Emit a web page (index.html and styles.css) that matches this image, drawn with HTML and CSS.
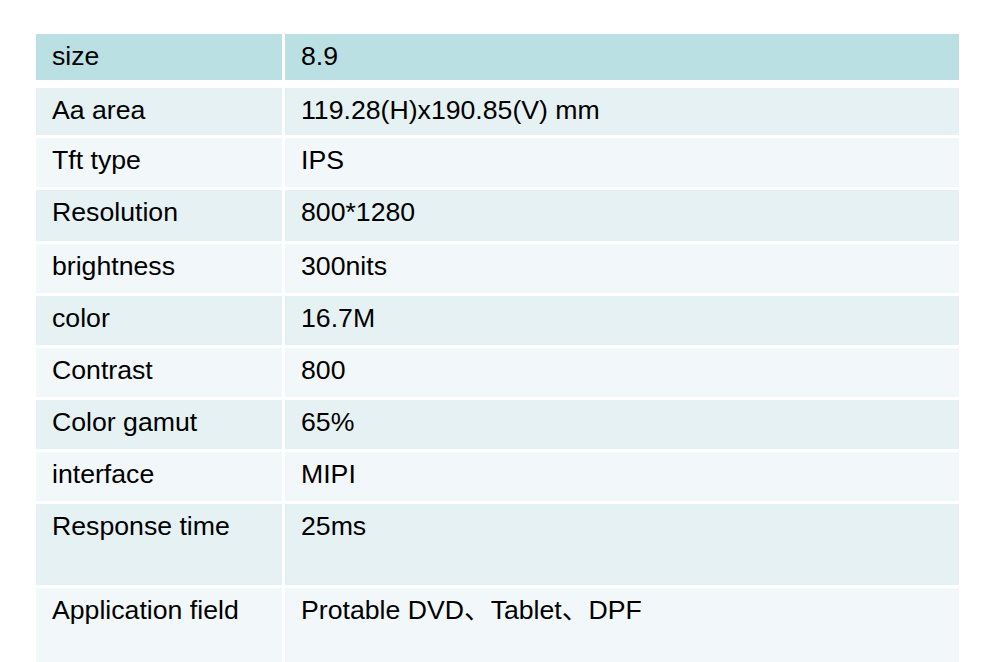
FILE: index.html
```html
<!DOCTYPE html>
<html lang="en">
<head>
<meta charset="utf-8">
<title>Spec table</title>
<link rel="stylesheet" href="styles.css">
</head>
<body>
<div class="spec">
  <div class="row head"><div class="cell">size</div><div class="cell">8.9</div></div>
  <div class="row odd h47"><div class="cell">Aa area</div><div class="cell">119.28(H)x190.85(V) mm</div></div>
  <div class="row even h49"><div class="cell">Tft type</div><div class="cell">IPS</div></div>
  <div class="row odd h51"><div class="cell">Resolution</div><div class="cell">800*1280</div></div>
  <div class="row even h49"><div class="cell">brightness</div><div class="cell">300nits</div></div>
  <div class="row odd h49"><div class="cell">color</div><div class="cell">16.7M</div></div>
  <div class="row even h49"><div class="cell">Contrast</div><div class="cell">800</div></div>
  <div class="row odd h49"><div class="cell">Color gamut</div><div class="cell">65%</div></div>
  <div class="row even h49"><div class="cell">interface</div><div class="cell">MIPI</div></div>
  <div class="row odd h81"><div class="cell">Response time</div><div class="cell">25ms</div></div>
  <div class="row even h81"><div class="cell">Application field</div><div class="cell">Protable DVD、Tablet、DPF</div></div>
</div>
</body>
</html>
```
FILE: styles.css
```css
html, body {
  margin: 0;
  padding: 0;
  background: #ffffff;
  overflow: hidden;
}
body {
  padding: 34px 27px 0 36px;
  font-family: "Liberation Sans", Arial, "Noto Sans CJK SC", sans-serif;
  font-size: 26.67px;
  line-height: 30px;
  color: #000000;
}
.spec {
  width: 923px;
  display: flex;
  flex-direction: column;
  gap: 3px;
}
.row {
  display: grid;
  grid-template-columns: 246px 674px;
  column-gap: 3px;
}
.cell {
  padding: 7px 0 0 16px;
  box-sizing: border-box;
  white-space: nowrap;
}
.head {
  height: 46px;
  margin-bottom: 5px;
}
.head .cell { background: #bbe0e3; }
.odd .cell { background: #e6f1f3; }
.even .cell { background: #f2f7f9; }
.h47 { height: 47px; }
.h49 { height: 49px; }
.h51 { height: 51px; }
.h81 { height: 81px; }
```
